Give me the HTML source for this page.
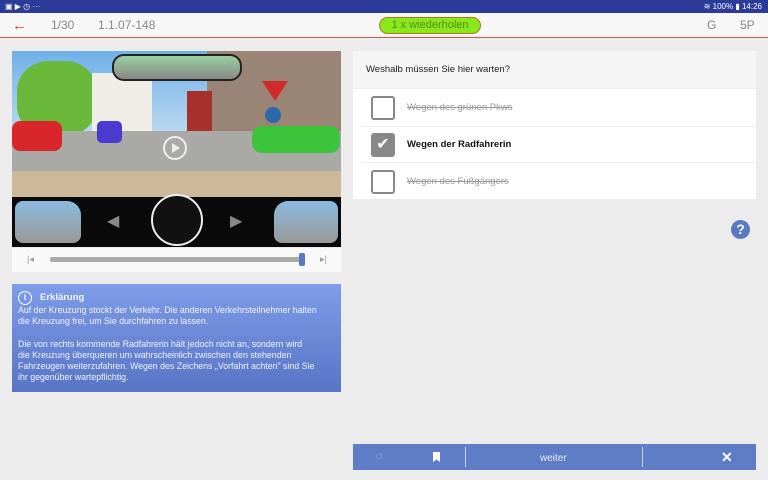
<!DOCTYPE html>
<html><head><meta charset="utf-8"><style>
*{margin:0;padding:0;box-sizing:border-box}
body{width:768px;height:480px;background:#ececec;font-family:"Liberation Sans",sans-serif;position:relative;overflow:hidden}
.abs{position:absolute}
</style></head><body>
<div class="abs" style="left:0;top:0;width:768px;height:13px;background:#2c3a99;color:#fff;font-size:8px;line-height:13px">
 <span style="position:absolute;left:5px">▣ ▶ ◷ ···</span>
 <span style="position:absolute;right:6px">≋ 100% ▮ 14:26</span>
</div>
<div class="abs" style="left:0;top:13px;width:768px;height:25px;background:#f7f7f7;border-bottom:1.5px solid #e0504a;color:#888;font-size:12px;line-height:25px">
 <span style="position:absolute;left:12px;color:#d4432c;font-size:15px">←</span>
 <span style="position:absolute;left:51px">1/30</span>
 <span style="position:absolute;left:98px">1.1.07-148</span>
 <span style="position:absolute;left:379px;top:4px;width:102px;height:17px;border:1px solid #c0701a;border-radius:9px;background:#88e81a;line-height:15px;text-align:center;color:#5a8a20;font-size:11px">1 x wiederholen</span>
 <span style="position:absolute;left:707px">G</span>
 <span style="position:absolute;left:740px">5P</span>
</div>
<!-- image -->
<div class="abs" style="left:12px;top:51px;width:329px;height:196px;overflow:hidden;background:#7a7a7a">
 <div class="abs" style="left:0;top:0;width:329px;height:80px;background:linear-gradient(#6fb0e8,#b8d8f0)"></div>
 <div class="abs" style="left:5px;top:10px;width:80px;height:75px;border-radius:40%;background:#6ab83a"></div>
 <div class="abs" style="left:80px;top:22px;width:60px;height:60px;background:#f0ede4"></div>
 <div class="abs" style="left:195px;top:0;width:134px;height:85px;background:#9a8476"></div>
 <div class="abs" style="left:175px;top:40px;width:25px;height:40px;background:#a8302a"></div>
 <div class="abs" style="left:0;top:80px;width:329px;height:40px;background:#a9a9a6"></div>
 <div class="abs" style="left:0;top:70px;width:50px;height:30px;border-radius:8px;background:#d8262a"></div>
 <div class="abs" style="left:240px;top:75px;width:88px;height:27px;border-radius:10px;background:#3cc43a"></div>
 <div class="abs" style="left:85px;top:70px;width:25px;height:22px;background:#4a3ad0;border-radius:5px"></div>
 <div class="abs" style="left:100px;top:3px;width:130px;height:27px;border:2px solid #222;border-radius:12px;background:linear-gradient(#9ad0a0,#888)"></div>
 <div class="abs" style="left:250px;top:30px;width:0;height:0;border-left:13px solid transparent;border-right:13px solid transparent;border-top:20px solid #d02a2a"></div>
 <div class="abs" style="left:253px;top:56px;width:16px;height:16px;border-radius:50%;background:#2a6aa8"></div>
 <div class="abs" style="left:151px;top:85px;width:24px;height:24px;border-radius:50%;border:2px solid #eee"></div>
 <div class="abs" style="left:160px;top:92px;width:0;height:0;border-top:5px solid transparent;border-bottom:5px solid transparent;border-left:8px solid #eee"></div>
 <div class="abs" style="left:0;top:120px;width:329px;height:26px;background:#cdb99a"></div>
 <div class="abs" style="left:0;top:146px;width:329px;height:50px;background:#0a0a0a"></div>
 <div class="abs" style="left:3px;top:150px;width:66px;height:42px;border-radius:8px 14px 8px 8px;background:linear-gradient(#8abbe0,#999)"></div>
 <div class="abs" style="left:262px;top:150px;width:64px;height:42px;border-radius:14px 8px 8px 8px;background:linear-gradient(#8abbe0,#999)"></div>
 <div class="abs" style="left:139px;top:143px;width:52px;height:52px;border-radius:50%;border:2px solid #eee;background:#111"></div>
 <div class="abs" style="left:95px;top:160px;color:#888;font-size:16px">◀</div>
 <div class="abs" style="left:218px;top:160px;color:#888;font-size:16px">▶</div>
</div>
<div class="abs" style="left:12px;top:248px;width:329px;height:24px;background:#f9f9f9">
 <div class="abs" style="left:38px;top:9px;width:254px;height:5px;background:#aaa;border-radius:2px"></div>
 <div class="abs" style="left:287px;top:5px;width:6px;height:13px;background:#5a78c4;border-radius:2px"></div>
 <div class="abs" style="left:15px;top:6px;color:#999;font-size:9px">|◂</div>
 <div class="abs" style="left:308px;top:6px;color:#999;font-size:9px">▸|</div>
</div>
<div class="abs" style="left:12px;top:284px;width:329px;height:108px;background:linear-gradient(#7e9ce8,#5875c6);color:#f2f4ff;font-size:8.8px;line-height:11.3px;padding:8px 6px;white-space:nowrap">
 <div style="display:flex;align-items:center;margin-top:-1px"><span style="display:inline-block;width:14px;height:14px;border:1.5px solid #fff;border-radius:50%;text-align:center;line-height:11px;font-weight:bold;font-size:9px">i</span><b style="margin-left:8px;font-size:9.5px">Erklärung</b></div>
 <div>Auf der Kreuzung stockt der Verkehr. Die anderen Verkehrsteilnehmer halten<br>die Kreuzung frei, um Sie durchfahren zu lassen.</div>
 <div style="margin-top:11px">Die von rechts kommende Radfahrerin hält jedoch nicht an, sondern wird<br>die Kreuzung überqueren um wahrscheinlich zwischen den stehenden<br>Fahrzeugen weiterzufahren. Wegen des Zeichens „Vorfahrt achten" sind Sie<br>ihr gegenüber wartepflichtig.</div>
</div>
<!-- right -->
<div class="abs" style="left:353px;top:51px;width:403px;height:37px;background:#f5f5f5;font-size:9.5px;line-height:37px;padding-left:13px;color:#222">Weshalb müssen Sie hier warten?</div>
<div class="abs" style="left:353px;top:89px;width:403px;height:110px;background:#fff"></div>
<div class="abs" style="left:361px;top:126px;width:395px;height:1px;background:#eee"></div>
<div class="abs" style="left:361px;top:162px;width:395px;height:1px;background:#eee"></div>
<div class="abs" style="left:371px;top:96px;width:24px;height:24px;border:2.5px solid #888;border-radius:3px"></div>
<div class="abs" style="left:371px;top:133px;width:24px;height:24px;background:#888;border-radius:3px;color:#fff;text-align:center;line-height:24px;font-size:16px">✔</div>
<div class="abs" style="left:371px;top:170px;width:24px;height:24px;border:2.5px solid #888;border-radius:3px"></div>
<div class="abs" style="left:407px;top:102px;font-size:9.5px;color:#999;text-decoration:line-through">Wegen des grünen Pkws</div>
<div class="abs" style="left:407px;top:139px;font-size:9.5px;color:#111;font-weight:bold">Wegen der Radfahrerin</div>
<div class="abs" style="left:407px;top:176px;font-size:9.5px;color:#999;text-decoration:line-through">Wegen des Fußgängers</div>
<div class="abs" style="left:731px;top:220px;width:19px;height:19px;border-radius:50%;background:#5a78c4;color:#fff;font-weight:bold;font-size:14px;text-align:center;line-height:19px">?</div>
<div class="abs" style="left:353px;top:444px;width:403px;height:26px;background:#5f7dc6;color:#e8ecff;font-size:10px">
 <span class="abs" style="left:22px;top:8px;color:#8097d4">↺</span>
 <span class="abs" style="left:80px;top:8px;width:7px;height:10px;background:#fff;clip-path:polygon(0 0,100% 0,100% 100%,50% 75%,0 100%)"></span>
 <span class="abs" style="left:112px;top:3px;width:1px;height:20px;background:#c8d2f0"></span>
 <span class="abs" style="left:187px;top:9px">weiter</span>
 <span class="abs" style="left:289px;top:3px;width:1px;height:20px;background:#c8d2f0"></span>
 <span class="abs" style="left:368px;top:5px;font-size:14px;font-weight:bold;color:#fff">✕</span>
</div>
</body></html>
